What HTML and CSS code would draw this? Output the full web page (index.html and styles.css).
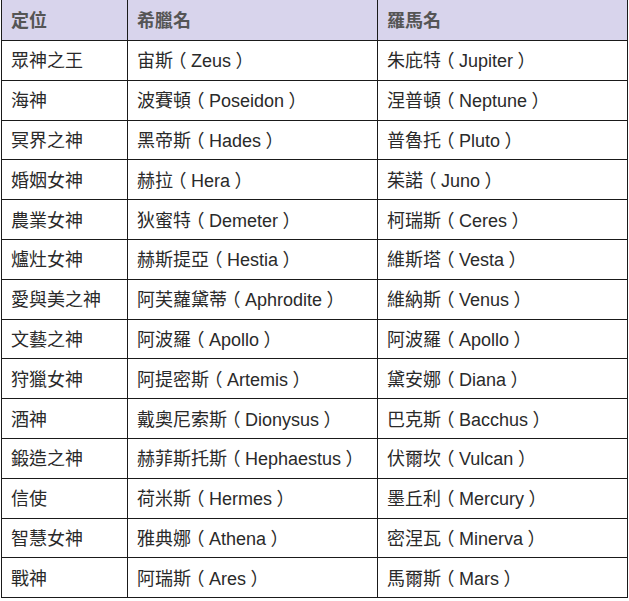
FILE: index.html
```html
<!DOCTYPE html>
<html lang="zh-Hant">
<head>
<meta charset="utf-8">
<link rel="stylesheet" href="styles.css">
</head>
<body>
<table class="gods">
<colgroup><col class="c1"><col class="c2"><col class="c3"></colgroup>
<thead>
<tr><th>定位</th><th>希臘名</th><th>羅馬名</th></tr>
</thead>
<tbody>
<tr><td>眾神之王</td><td>宙斯<span class="p">（</span>Zeus<span class="p">）</span></td><td>朱庇特<span class="p">（</span>Jupiter<span class="p">）</span></td></tr>
<tr><td>海神</td><td>波賽頓<span class="p">（</span>Poseidon<span class="p">）</span></td><td>涅普頓<span class="p">（</span>Neptune<span class="p">）</span></td></tr>
<tr><td>冥界之神</td><td>黑帝斯<span class="p">（</span>Hades<span class="p">）</span></td><td>普魯托<span class="p">（</span>Pluto<span class="p">）</span></td></tr>
<tr><td>婚姻女神</td><td>赫拉<span class="p">（</span>Hera<span class="p">）</span></td><td>茱諾<span class="p">（</span>Juno<span class="p">）</span></td></tr>
<tr><td>農業女神</td><td>狄蜜特<span class="p">（</span>Demeter<span class="p">）</span></td><td>柯瑞斯<span class="p">（</span>Ceres<span class="p">）</span></td></tr>
<tr><td>爐灶女神</td><td>赫斯提亞<span class="p">（</span>Hestia<span class="p">）</span></td><td>維斯塔<span class="p">（</span>Vesta<span class="p">）</span></td></tr>
<tr><td>愛與美之神</td><td>阿芙蘿黛蒂<span class="p">（</span>Aphrodite<span class="p">）</span></td><td>維納斯<span class="p">（</span>Venus<span class="p">）</span></td></tr>
<tr><td>文藝之神</td><td>阿波羅<span class="p">（</span>Apollo<span class="p">）</span></td><td>阿波羅<span class="p">（</span>Apollo<span class="p">）</span></td></tr>
<tr><td>狩獵女神</td><td>阿提密斯<span class="p">（</span>Artemis<span class="p">）</span></td><td>黛安娜<span class="p">（</span>Diana<span class="p">）</span></td></tr>
<tr><td>酒神</td><td>戴奧尼索斯<span class="p">（</span>Dionysus<span class="p">）</span></td><td>巴克斯<span class="p">（</span>Bacchus<span class="p">）</span></td></tr>
<tr><td>鍛造之神</td><td>赫菲斯托斯<span class="p">（</span>Hephaestus<span class="p">）</span></td><td>伏爾坎<span class="p">（</span>Vulcan<span class="p">）</span></td></tr>
<tr><td>信使</td><td>荷米斯<span class="p">（</span>Hermes<span class="p">）</span></td><td>墨丘利<span class="p">（</span>Mercury<span class="p">）</span></td></tr>
<tr><td>智慧女神</td><td>雅典娜<span class="p">（</span>Athena<span class="p">）</span></td><td>密涅瓦<span class="p">（</span>Minerva<span class="p">）</span></td></tr>
<tr><td>戰神</td><td>阿瑞斯<span class="p">（</span>Ares<span class="p">）</span></td><td>馬爾斯<span class="p">（</span>Mars<span class="p">）</span></td></tr>
</tbody>
</table>
</body>
</html>
```
FILE: styles.css
```css
html, body {
  margin: 0;
  padding: 0;
  background: #ffffff;
}
body {
  padding: 0 0 0 1px;
  font-family: "Liberation Sans", "Noto Sans CJK TC", sans-serif;
  font-size: 18px;
  color: #2a2a2a;
}
.gods {
  border-collapse: collapse;
  table-layout: fixed;
  width: 626px;
  margin-top: -1px;
}
.c1 { width: 126px; }
.c2 { width: 250px; }
.c3 { width: 250px; }
.gods th, .gods td {
  border: 1px solid #1a1a1a;
  padding: 2px 9px 0;
  text-align: left;
  white-space: nowrap;
  line-height: 22px;
}
.gods th {
  background: #d8d4ec;
  color: #555555;
  font-weight: bold;
  height: 38px;
}
.gods td {
  height: 36.8px;
}
.p {
  display: inline-block;
  width: 18px;
  text-align: center;
  font-feature-settings: "halt" 1;
}
```
